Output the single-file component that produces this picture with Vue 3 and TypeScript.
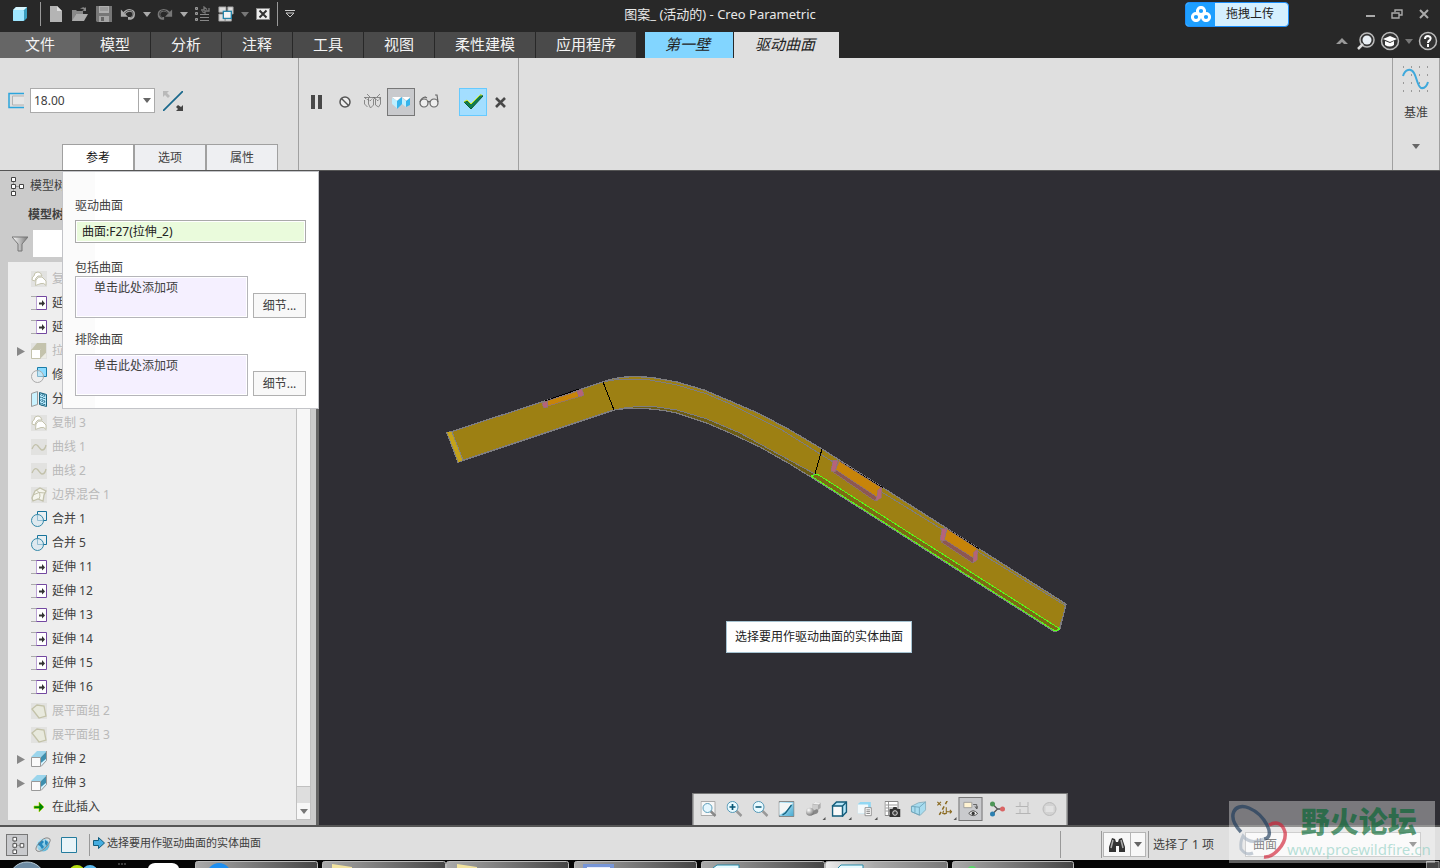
<script setup lang="ts">
import { ref } from 'vue'

interface TreeItem {
  icon: string
  label: string
  dim?: boolean
  branch?: boolean
}

const menuTabs: string[] = ['模型', '分析', '注释', '工具', '视图', '柔性建模', '应用程序']

const quickTools = [
  { icon: 'doc', label: '新建' },
  { icon: 'folder', label: '打开' },
  { icon: 'save', label: '保存' },
  { icon: 'undo', label: '撤消' },
  { icon: 'caret', label: '撤消列表', narrow: true },
  { icon: 'redo', label: '重做' },
  { icon: 'caret', label: '重做列表', narrow: true },
  { icon: 'regen', label: '重新生成' },
  { icon: 'windows', label: '窗口' },
  { icon: 'caret-dim', label: '窗口列表', narrow: true },
  { icon: 'closewin', label: '关闭' },
]

const tree: TreeItem[] = [
  { icon: 'copy', label: '复制', dim: true },
  { icon: 'extend', label: '延伸' },
  { icon: 'extend', label: '延伸' },
  { icon: 'extrude-dim', label: '拉伸', dim: true, branch: true },
  { icon: 'trim', label: '修剪' },
  { icon: 'split', label: '分割' },
  { icon: 'copy', label: '复制 3', dim: true },
  { icon: 'curve', label: '曲线 1', dim: true },
  { icon: 'curve', label: '曲线 2', dim: true },
  { icon: 'blend', label: '边界混合 1', dim: true },
  { icon: 'merge', label: '合并 1' },
  { icon: 'merge', label: '合并 5' },
  { icon: 'extend', label: '延伸 11' },
  { icon: 'extend', label: '延伸 12' },
  { icon: 'extend', label: '延伸 13' },
  { icon: 'extend', label: '延伸 14' },
  { icon: 'extend', label: '延伸 15' },
  { icon: 'extend', label: '延伸 16' },
  { icon: 'flatten', label: '展平面组 2', dim: true },
  { icon: 'flatten', label: '展平面组 3', dim: true },
  { icon: 'extrude', label: '拉伸 2', branch: true },
  { icon: 'extrude', label: '拉伸 3', branch: true },
  { icon: 'insert', label: '在此插入' },
]

const viewTools = [
  { icon: 'zoomfit', label: '重新调整' },
  { icon: 'zoomin', label: '放大' },
  { icon: 'zoomout', label: '缩小' },
  { icon: 'repaint', label: '重画' },
  { icon: 'shade', label: '渲染选项', more: true },
  { icon: 'display', label: '显示样式', more: true },
  { icon: 'saved', label: '已保存方向', more: true },
  { icon: 'viewmgr', label: '视图管理器' },
  { icon: 'persp', label: '透视图' },
  { icon: 'datums', label: '基准显示', more: true },
  { icon: 'annot', label: '注释显示', on: true },
  { icon: 'spin', label: '旋转中心' },
  { icon: 'sim', label: '模拟' },
  { icon: 'ball', label: '暂停' },
]

const panelTabs: string[] = ['参考', '选项', '属性']
const activePanel = ref(0)
const thickness = ref('18.00')
const drivenSurface = ref('曲面:F27(拉伸_2)')
const hint = '单击此处添加项'
</script>

<template>
  <div class="app">
    <svg class="sprite" aria-hidden="true">
      <defs>
        <linearGradient id="gBlue" x1="0" y1="0" x2="1" y2="1">
          <stop offset="0" stop-color="#d5f3ff" /><stop offset="1" stop-color="#45a9d0" />
        </linearGradient>
        <linearGradient id="gGrey" x1="0" y1="0" x2="1" y2="0">
          <stop offset="0" stop-color="#fff" /><stop offset="1" stop-color="#777" />
        </linearGradient>
        <radialGradient id="gSphere" cx=".35" cy=".3" r=".8">
          <stop offset="0" stop-color="#fff" /><stop offset="1" stop-color="#6a6a6a" />
        </radialGradient>
      </defs>
      <symbol id="cube-logo" viewBox="0 0 16 16">
        <path d="M1 4 4 1h11v11l-3 3H1z" fill="#3b9fc0" /><path d="M1 4 4 1h11l-3 3z" fill="#d7f6ff" /><rect x="1" y="4" width="11" height="11" rx="1" fill="#9fe6ff" />
      </symbol>
      <symbol id="doc" viewBox="0 0 16 16">
        <path d="M2 0h7l5 5v11H2z" fill="#b4b4b4" /><path d="M9 0v5h5z" fill="#dedede" />
      </symbol>
      <symbol id="folder" viewBox="0 0 16 16">
        <path d="M0 4h4l1 1h6v3H4l-3 7H0z" fill="#888" /><path d="M4 8h12l-4 7H0z" fill="#aaa" /><path d="M8 3q3-3 5-1l1-1v4h-4l2-1q-1-2-4-1z" fill="#888" />
      </symbol>
      <symbol id="save" viewBox="0 0 16 16">
        <path d="M0 0h16v16H1l-1-1z" fill="#777" /><rect x="3" width="10" height="7" fill="#b0b0b0" /><path d="M4 2h8M4 4h8" stroke="#888" /><rect x="3" y="10" width="10" height="6" fill="#a5a5a5" /><rect x="5" y="11" width="3" height="4" fill="#666" />
      </symbol>
      <symbol id="undo" viewBox="0 0 18 16">
        <path d="M1 3v8h8z" fill="#aaa" /><path d="M4 8q4-5 8-4c5 1 4 8 0 9H9" fill="none" stroke="#aaa" stroke-width="3" /><path d="M5 7q4-4 7-3c4 1 3 7 0 8" fill="none" stroke="#444" />
      </symbol>
      <symbol id="redo" viewBox="0 0 18 16">
        <path d="M17 3v8H9z" fill="#777" /><path d="M14 7Q10 3 6 4c-5 1-5 8 0 9h2" fill="none" stroke="#777" stroke-width="3" /><path d="M13 7Q9 3 6 4c-4 1-4 7 0 8" fill="none" stroke="#333" />
      </symbol>
      <symbol id="caret" viewBox="0 0 8 5"><path d="M0 0h8L4 5z" fill="#aaa" /></symbol>
      <symbol id="caret-dim" viewBox="0 0 8 5"><path d="M0 0h8L4 5z" fill="#777" /></symbol>
      <symbol id="caret-dark" viewBox="0 0 8 5"><path d="M0 0h8L4 5z" fill="#666" /></symbol>
      <symbol id="regen" viewBox="0 0 16 16">
        <path d="M1.500 1.500h2v2h-2zM1.500 6.500h2v2h-2zM1.500 12.500h2v2h-2z" fill="#666" stroke="#999" /><path d="M6 8.500h9M6 11.500h9M6 14.500h9" stroke="#888" /><path d="M7 4h3V1l3 2.500M15 2v3h-4v2L8 5.500" fill="none" stroke="#777" stroke-width="1.300" />
      </symbol>
      <symbol id="windows" viewBox="0 0 18 18">
        <path d="M1 1h8v6H1zM11 1h6v8h-6zM1 9h7v8H1zM8 14h7v3H8z" fill="#ddd" stroke="#999" /><rect x="6" y="6" width="9" height="8" fill="#f4f4f4" stroke="#2585aa" stroke-width="1.500" />
      </symbol>
      <symbol id="closewin" viewBox="-1 -1 16 16">
        <rect x=".5" y="1.500" width="13" height="11" fill="#eee" stroke="#888" /><path d="m3.500 3.500 7 7m0-7-7 7" stroke="#333" stroke-width="2" />
      </symbol>
      <symbol id="thick" viewBox="0 0 16 16">
        <path d="M16 1H1v14h15" fill="none" stroke="#2ca5dc" stroke-width="1.500" /><path d="M16 3.500H4.500v9H16" fill="#e6e6e6" stroke="#b3b3b3" />
      </symbol>
      <symbol id="flip" viewBox="0 0 20 20">
        <path d="M0 20 20 0" stroke="#19688c" stroke-width="1.700" /><path d="M0 0h6L4 2l3 3-2 2-3-3-2 2z" fill="#b9b9b9" /><path d="M20 20h-7l2-2-2-2 2-2 3 2 2-2z" fill="#444" />
      </symbol>
      <symbol id="pause" viewBox="0 0 16 16"><path d="M2 1h4v14H2zM9 1h4v14H9z" fill="#484848" /></symbol>
      <symbol id="none" viewBox="0 0 16 16"><circle cx="8" cy="8" r="5" fill="#eee" stroke="#555" stroke-width="1.500" /><path d="m4 4 8 8" stroke="#555" stroke-width="1.500" /></symbol>
      <symbol id="skeleton" viewBox="0 0 20 16">
        <path d="M1 3.500h17M5.500 4v6l2 4 3-3V5l4-2M12.500 5v6l3 2 2-3V4M1.500 6v4l3 3M4 0l3 3M17 0l-4 4" fill="none" stroke="#888" /><path d="m2 4 5 3 4-4 4 4 3-4" fill="none" stroke="#666" stroke-dasharray="1 1" />
      </symbol>
      <symbol id="solid" viewBox="0 0 20 16">
        <path d="M1 3h9l-4 4zM11 3h8l-3 4z" fill="#fff" /><path d="M1 4v6l6 5V7zM11 4l4 3v6l-4-3z" fill="#bdefff" /><path d="M6 7l5-4v7l-5 5zM15 7l4-3v7l-4 2z" fill="#35b4eb" />
      </symbol>
      <symbol id="glasses" viewBox="0 0 20 16">
        <circle cx="5" cy="9" r="4" fill="#eee" stroke="#666" stroke-width="1.200" /><circle cx="15" cy="9" r="4" fill="#eee" stroke="#666" stroke-width="1.200" /><path d="M1 8q1-4 5-5l2 1M9 8q1-1 2 0M19 8l-1-7h-2" fill="none" stroke="#666" stroke-width="1.200" />
      </symbol>
      <symbol id="check" viewBox="0 0 20 16"><path d="m1 8 3-1 4 3L17 1l3 1L8 15z" fill="#127b50" stroke="#0b5a31" /><path d="m1 8 3-2 4 4 9-9h2" fill="none" stroke="#d4ee18" /></symbol>
      <symbol id="cross" viewBox="0 0 16 16"><path d="m3 4 9 9M12 4l-9 9" stroke="#484848" stroke-width="2.600" /></symbol>
      <symbol id="wave" viewBox="0 0 28 28">
        <path d="M1 1h1M9 1h1M17 1h1M25 1h1M9 9h1M17 9h1M25 9h1M1 17h1M9 17h1M17 17h1M1 25h1M9 25h1M17 25h1M25 25h1" stroke="#555" /><path d="M1 10C3 3 9 2 12 7s3 12 7 15q5 1 7-6" fill="none" stroke="#3fa9dc" stroke-width="2" />
      </symbol>
      <symbol id="cloud" viewBox="0 0 20 16"><g fill="none" stroke="#fff" stroke-width="3"><circle cx="10" cy="5" r="3.600" /><circle cx="5" cy="11" r="3.600" /><circle cx="15" cy="11" r="3.600" /></g></symbol>
      <symbol id="min" viewBox="0 0 12 12"><path d="M2 8h9" stroke="#aaa" stroke-width="2" /></symbol>
      <symbol id="restore" viewBox="0 0 12 12"><path d="M4 4V2h7v5H8M1 5h7v5H1z" fill="none" stroke="#aaa" stroke-width="1.400" /></symbol>
      <symbol id="close" viewBox="0 0 12 12"><path d="m2 2 8 8m0-8-8 8" stroke="#aaa" stroke-width="2" /></symbol>
      <symbol id="up" viewBox="0 0 12 8"><path d="m0 7 6-6 6 6H8L6 5 4 7z" fill="#999" /></symbol>
      <symbol id="search" viewBox="0 0 18 18"><circle cx="10" cy="8" r="7" fill="#333" stroke="#bbb" stroke-width="1.500" /><circle cx="10" cy="8" r="4.500" fill="#eaf0f5" /><path d="m6 12-5 5" stroke="#ddd" stroke-width="2.500" /></symbol>
      <symbol id="hat" viewBox="0 0 20 20"><circle cx="10" cy="10" r="8.500" fill="#333" stroke="#bbb" stroke-width="1.500" /><path d="m3 8 7-3 7 3-7 3z" fill="#fff" /><path d="M5 10v4q5 3 9 0v-4l-4 2z" fill="#fff" /></symbol>
      <symbol id="help" viewBox="0 0 20 20"><circle cx="10" cy="10" r="8.500" fill="#333" stroke="#bbb" stroke-width="1.500" /><path d="M7 8q0-3 3-3 4 1 2 4-2 1-2 3" fill="none" stroke="#fff" stroke-width="2" /><path d="M9 13h2v3H9z" fill="#fff" /></symbol>
      <symbol id="nodes" viewBox="0 0 16 20">
        <path d="M5.500 5v10M5 10.500h6" stroke="#999" /><path d="M3.500 1.500h4v4h-4zM3.500 8.500h4v4h-4zM3.500 15.500h4v4h-4zM11.500 8.500h4v4h-4z" fill="#fff" stroke="#444" />
      </symbol>
      <symbol id="filter" viewBox="0 0 16 16"><path d="M0 1h16l-6 7v7H6V8z" fill="url(#gGrey)" stroke="#777" /></symbol>
      <symbol id="tri" viewBox="0 0 8 9"><path d="M0 0v9l8-4.500z" fill="#888" /></symbol>
      <symbol id="copy" viewBox="0 0 16 16"><path d="M0 0h16v16H0z" fill="#e2e2e0" /><path d="M1 9q0-4 2-4 0-4 4-4 3 0 4 4H7q-3 2-3 5z" fill="#fff" stroke="#c4c3ad" /><path d="M4.500 14.500 5 9q2-4 6-3l4 4v4.500q-2-3-5-2t-5.500 2z" fill="#fff" stroke="#c4c3ad" /></symbol>
      <symbol id="extend" viewBox="0 0 16 16"><path d="M0 1.500h5M0 14.500h5" stroke="#aaa" /><path d="M5.500 1.500h10v13h-10z" fill="#fff" stroke="#7348a0" /><path d="M5.500 2v12" stroke="#bca4d5" /><path d="M8 7.500h3V5l3 3.500-3 3V9.500H8z" fill="#333" /></symbol>
      <symbol id="extrude-dim" viewBox="0 0 16 16"><path d="M0 0h16v16H0z" fill="#e2e2e0" /><path d="M1 6 6 0h9v10l-5 5V6z" fill="#c4c3ad" /><path d="M.5 6.500h9v9h-9z" fill="#fff" stroke="#c4c3ad" /><path d="m10 15 5-5v5z" fill="#ecece4" /></symbol>
      <symbol id="trim" viewBox="0 0 16 16"><path d="M6.500.500h9v9h-9z" fill="#8ddcff" stroke="#1b7da8" /><circle cx="6.500" cy="9.500" r="6" fill="#eee" fill-opacity=".5" stroke="#aaa" /></symbol>
      <symbol id="split" viewBox="0 0 16 16"><path d="m.5 2.500 6-2v13l-6 2z" fill="#c9f2ff" stroke="#999" /><path d="m8.500 1.500 7 2v12l-7-2z" fill="#bdecff" stroke="#17627f" /><path d="m9 3 6 2M9 6l6 2M9 9l6 2M9 12l6 2M11 2v13M13 3v12" stroke="#17627f" stroke-dasharray="1 1" /></symbol>
      <symbol id="curve" viewBox="0 0 16 16"><path d="M0 0h16v16H0z" fill="#e2e2e0" /><path d="M1 10q3-7 6-3t4 4q3 0 4-5" fill="none" stroke="#c2c1aa" stroke-width="1.300" /></symbol>
      <symbol id="blend" viewBox="0 0 16 16"><path d="M0 0h16v16H0z" fill="#e2e2e0" /><path d="m1 11 3-7 5-3 6 3-2 4-1 6-5-2-5 2z" fill="#f5f5ed" stroke="#c2c1aa" stroke-width="1.300" /><path d="M5 3q6 3 3 9M2 8q6-4 12-2" fill="none" stroke="#c2c1aa" /></symbol>
      <symbol id="merge" viewBox="0 0 16 16"><path d="M6.500.500h9v9h-9z" fill="#e8eff2" stroke="#17739b" /><circle cx="6.500" cy="9.500" r="6" fill="#d6e7ef" fill-opacity=".65" stroke="#3488a8" /></symbol>
      <symbol id="flatten" viewBox="0 0 16 16"><path d="M0 0h16v16H0z" fill="#e2e2e0" /><path d="m1 6 5-4 7 1 2 10-7 2z" fill="#e8e9dd" stroke="#c3c2a9" stroke-width="1.300" /></symbol>
      <symbol id="extrude" viewBox="0 0 16 16"><path d="M0 6 6 0h10L10 6z" fill="#9bd5ec" /><path d="M10 6 16 0v9l-6 3z" fill="#3e8fae" /><path d="m10 15 6-6v-2l-6 5z" fill="#d5f3ff" /><path d="m10 15.500 5.500-6V0" fill="none" stroke="#999" /><path d="M.5 6.500h9v9h-9z" fill="#fafafa" stroke="#999" /></symbol>
      <symbol id="insert" viewBox="0 0 16 16"><path d="M3 7h5V3l5 5-5 5V9.500H3z" fill="#008500" stroke="#b2d900" stroke-width=".6" /></symbol>
      <symbol id="globe" viewBox="0 0 16 16"><circle cx="8" cy="8" r="6.500" fill="url(#gBlue)" /><path d="m3 6 4-3 2 2-2 2 2 3-2 2-2-3-2-1zM10 3l3 2-1 4-2-2z" fill="#2687bc" /><path d="M2 14q-3-2 2-8t9-5q5 1-1 8T2 14z" fill="none" stroke="#888" /></symbol>
      <symbol id="square" viewBox="0 0 16 16"><path d="M.5.500h15v15H.5z" fill="#e9f4f8" stroke="#247b9d" /></symbol>
      <symbol id="next" viewBox="0 0 12 12"><path d="M.5 3.500h5v-3l6 5.500-6 5.500v-3h-5z" fill="#45ade0" stroke="#125c7d" /></symbol>
      <symbol id="binoc" viewBox="0 0 18 16"><path d="m4 1 3 1 1 3h2l1-3 3-1 3 9v5h-6V9H8v6H1v-5z" fill="#333" /><path d="m5 3-2 8m10-8 2 8" stroke="#aaa" stroke-width="1.500" /></symbol>
      <symbol id="zoomfit" viewBox="0 0 16 16"><path d="M.5.500h14v14H.5z" fill="#f7f7f7" stroke="#aaa" /><path d="m10 10 5 5" stroke="#888" stroke-width="2.500" /><circle cx="7" cy="7" r="4.500" fill="#e5f7ff" stroke="#5b9db9" /></symbol>
      <symbol id="zoomin" viewBox="0 0 16 16"><path d="m10 10 5 5" stroke="#999" stroke-width="2.500" /><circle cx="6" cy="6" r="5.500" fill="#e9faff" stroke="#5397b5" /><path d="M3 6h6M6 3v6" stroke="#075675" stroke-width="1.700" /></symbol>
      <symbol id="zoomout" viewBox="0 0 16 16"><path d="m10 10 5 5" stroke="#999" stroke-width="2.500" /><circle cx="6" cy="6" r="5.500" fill="#e9faff" stroke="#5397b5" /><path d="M3 6h6" stroke="#075675" stroke-width="1.700" /></symbol>
      <symbol id="repaint" viewBox="0 0 16 16"><path d="M.5.500h15v15H.5z" fill="url(#gBlue)" stroke="#888" /><path d="M1 2h14q-3 1-6 7l-8 5z" fill="#f4f6f6" /><path d="m13 4-6 8-3 2" stroke="#17617e" fill="none" stroke-width="1.300" /></symbol>
      <symbol id="shade" viewBox="0 0 18 16"><path d="m8 2 3-2 6 1v6l-3 2H8z" fill="#aaa" /><path d="m8 2 3-2 6 1-2 2z" fill="#eee" /><path d="M8 3h6v6H8z" fill="#ccc" /><path d="m6 11 7-3q3 2 0 5l-6 2z" fill="#888" /><circle cx="5" cy="11" r="4.500" fill="url(#gSphere)" /></symbol>
      <symbol id="display" viewBox="0 0 16 16"><path d="m1 5 4-4h10v10l-4 4z" fill="#b6e7fa" stroke="#155d7b" stroke-width="1.500" /><path d="M1 5h10v10H1zM11 5l4-4" fill="#fafafa" stroke="#155d7b" stroke-width="1.500" /></symbol>
      <symbol id="saved" viewBox="0 0 18 16"><path d="m0 3 3-3h12v9l-3 4H0z" fill="#92d7f2" /><path d="M0 3h12v10H0z" fill="#f3f9fb" /><path d="M8.500 6.500h7v9h-7z" fill="#fff" stroke="#888" /><path d="M10 9h4M10 11h4M10 13h4" stroke="#777" /></symbol>
      <symbol id="viewmgr" viewBox="0 0 16 16"><path d="M.5.500h13v14H.5z" fill="#fff" stroke="#888" /><path d="M1 4h12M1 7h12M1 10h12M4 1v13" stroke="#999" /><path d="M5 8h3l1-2h3l1 2h3v8H5z" fill="#333" /><circle cx="10.500" cy="12" r="2.300" fill="#444" stroke="#ddd" /></symbol>
      <symbol id="persp" viewBox="0 0 18 16"><path d="M1 5 9 1l8-1v9l-6 6-10-4z" fill="#a8dcef" stroke="#87aebc" /><path d="m1 5 9 1v9L1 11zM10 6l7-6M5 5v7" fill="none" stroke="#6ca5bb" /></symbol>
      <symbol id="datums" viewBox="0 0 18 18"><path d="m1 1 4 4m0-4L1 5" stroke="#8a6a20" stroke-width="1.300" /><path d="M12 0 3 16" fill="none" stroke="#8a6a20" stroke-width="1.700" stroke-dasharray="4 3" /><path d="M11 7v7H8M11 12h6m-2-2 2 2-2 2M8 11l-1 3 3 1" fill="none" stroke="#8a6a20" stroke-width="1.200" /></symbol>
      <symbol id="annot" viewBox="0 0 18 18"><path d="M1.500 1.500h9v6h-9z" fill="#fff3d2" stroke="#999" /><path d="M12 4h4v5M14 6l2 3 1-3" fill="none" stroke="#555" /><path d="M7 14q5-6 10 0-5 5-10 0z" fill="#eee" stroke="#444" /><circle cx="12" cy="14" r="1.800" fill="#333" /></symbol>
      <symbol id="spin" viewBox="0 0 16 16"><path d="m3 3 5 5-5 5m5-5h5" fill="none" stroke="#555" stroke-width="1.300" /><circle cx="3" cy="3" r="2.500" fill="#4d9657" /><circle cx="3" cy="13" r="2.500" fill="#2c80b0" /><circle cx="13" cy="8" r="2.500" fill="#da6464" /></symbol>
      <symbol id="sim" viewBox="0 0 16 16"><path d="M4.500 1v4.500H0m4.500 0h8V1M0 12.500h15M4.500 8v4m8-6v6" fill="none" stroke="#b5b5b5" /></symbol>
      <symbol id="ball" viewBox="0 0 16 16"><circle cx="8" cy="8" r="6.500" fill="#d2d2d2" stroke="#bbb" /><path d="M4 5h8v6H4z" fill="#e2e2e2" /></symbol>
    </svg>

    <header class="titlebar">
      <div class="quick">
        <span class="logo"><svg width="16" height="16"><use href="#cube-logo" /></svg></span>
        <span class="bar"></span>
        <div class="tools">
          <button v-for="(t, i) in quickTools" :key="i" :class="['tool', { narrow: t.narrow }]" :aria-label="t.label">
            <svg :class="t.narrow ? 'caret' : 'ico'"><use :href="'#' + t.icon" /></svg>
          </button>
        </div>
        <span class="bar"></span>
        <button class="tool" aria-label="自定义快速访问工具栏">
          <svg width="10" height="8" viewBox="0 0 10 8"><path d="M0 .500h10M1 3h8L5 7z" fill="none" stroke="#ccc" /></svg>
        </button>
      </div>
      <h1 class="title">图案_ (活动的) - Creo Parametric</h1>
      <div class="window-side">
        <button class="upload"><span class="upload-icon"><svg width="20" height="16"><use href="#cloud" /></svg></span><span class="upload-text">拖拽上传</span></button>
        <div class="win-buttons">
          <button aria-label="最小化"><svg width="12" height="12"><use href="#min" /></svg></button>
          <button aria-label="还原"><svg width="12" height="12"><use href="#restore" /></svg></button>
          <button aria-label="关闭窗口"><svg width="12" height="12"><use href="#close" /></svg></button>
        </div>
      </div>
    </header>

    <nav class="tabs">
      <button class="file">文件</button>
      <button v-for="m in menuTabs" :key="m" class="tab">{{ m }}</button>
      <button class="context wall">第一壁</button>
      <button class="context current">驱动曲面</button>
      <div class="help-tools">
        <button aria-label="最小化功能区"><svg width="12" height="8"><use href="#up" /></svg></button>
        <button aria-label="搜索"><svg width="18" height="18"><use href="#search" /></svg></button>
        <button aria-label="学习"><svg width="20" height="20"><use href="#hat" /></svg></button>
        <button class="slim" aria-label="学习列表"><svg class="caret"><use href="#caret-dim" /></svg></button>
        <button aria-label="帮助"><svg width="20" height="20"><use href="#help" /></svg></button>
      </div>
    </nav>

    <section class="ribbon">
      <div class="group settings">
        <div class="thickness">
          <svg width="16" height="17"><use href="#thick" /></svg>
          <div class="combo">
            <input v-model="thickness" aria-label="厚度" />
            <button aria-label="厚度列表"><svg class="caret"><use href="#caret-dark" /></svg></button>
          </div>
          <button class="plain" aria-label="反向"><svg width="20" height="20"><use href="#flip" /></svg></button>
        </div>
        <div class="panel-tabs" role="tablist">
          <button v-for="(p, i) in panelTabs" :key="p" role="tab" :aria-selected="i === activePanel" :class="{ on: i === activePanel }" @click="activePanel = i">{{ p }}</button>
        </div>
      </div>
      <div class="group actions">
        <button aria-label="暂停"><svg width="16" height="16"><use href="#pause" /></svg></button>
        <button aria-label="无预览"><svg width="16" height="16"><use href="#none" /></svg></button>
        <button aria-label="分离"><svg width="20" height="16"><use href="#skeleton" /></svg></button>
        <button class="pressed" aria-label="连接"><svg width="20" height="16"><use href="#solid" /></svg></button>
        <button aria-label="预览"><svg width="20" height="16"><use href="#glasses" /></svg></button>
        <button class="ok" aria-label="确定"><svg width="20" height="16"><use href="#check" /></svg></button>
        <button aria-label="取消"><svg width="16" height="16"><use href="#cross" /></svg></button>
      </div>
      <button class="datum">
        <svg width="28" height="28"><use href="#wave" /></svg>
        <span>基准</span>
        <svg class="caret"><use href="#caret-dark" /></svg>
      </button>
    </section>

    <main class="work">
      <aside class="side">
        <div class="side-title"><svg width="16" height="20"><use href="#nodes" /></svg><span>模型树</span></div>
        <div class="side-sub">模型树</div>
        <div class="side-filter"><svg width="16" height="16"><use href="#filter" /></svg><input aria-label="过滤" /></div>
        <div class="tree-box">
          <ul class="tree">
            <li v-for="(n, i) in tree" :key="i" :class="{ dim: n.dim }">
              <span class="twist"><svg v-if="n.branch" width="8" height="9"><use href="#tri" /></svg></span>
              <svg width="16" height="16"><use :href="'#' + n.icon" /></svg>
              <span>{{ n.label }}</span>
            </li>
          </ul>
          <div class="scroll">
            <div class="thumb"></div>
            <div class="track"></div>
            <button aria-label="向下滚动"><svg class="caret"><use href="#caret-dim" /></svg></button>
          </div>
        </div>
      </aside>

      <div class="canvas">
        <svg class="model" width="650" height="290" viewBox="430 360 650 290" shape-rendering="crispEdges">
          <path d="M447 433 603 382Q613 378 626 377 640 376 655 378L677 382 704 390 730 401 760 414 790 430 822 449 1066 604 1060 629 1055 632 811 477 790 464 760 447 730 433 707 423 677 413Q655 408 630 408L614 410 458 462z" fill="#9d8013" stroke="#7e7d80" stroke-width="1.300" />
          <path d="m447 433 4-1 11 28-4 2z" fill="#c4a31b" stroke="#c4a31b" />
          <path d="m447 433 11 29M452 432l11 28" stroke="#85847a" />
          <path d="M614 410Q635 405 657 407L677 410 707 419 740 433 780 455 815 474 811 477 790 464 760 447 730 433 707 423 677 413Q655 408 630 408z" fill="#6d5d14" stroke="#7e7d80" />
          <path d="M603 382q12-3 24-3l23 1 27 5 30 9 23 10 30 15 22 11 35 22 249 154-7 23" fill="none" stroke="#7e7d80" />
          <path d="m811 476 6-2 243 155-5 2z" fill="#7d6915" stroke="#55ff18" />
          <path d="m603 382 11 28M822 449l-7 25M545 401l34-12M839 461l44 27M947 529l32 20" fill="none" stroke="#000" />
          <g stroke="#8b7480" stroke-width=".7">
            <path d="m547 401 31-10v6l-30 9zM839 461l43 27-5 9-42-26zM947 529l31 20-4 10-30-19z" fill="#c78409" />
            <path d="m833 472 3-2 41 27-2 4zM941 542l4-2 30 19-2 4z" fill="#8d5752" />
            <path d="m542 403 5-2 1 6-4 1zM577 391l5-2 2 6-5 2zM833 460h5l-3 12-4-1zM882 487l-4 3-2 11 5-3zM942 529l5-1-3 13-4-1zM978 549l-4 3-1 11 4-3z" fill="#b5637a" />
          </g>
        </svg>
        <div class="tip">选择要用作驱动曲面的实体曲面</div>
        <div class="view-tools">
          <button v-for="v in viewTools" :key="v.icon" :class="{ on: v.on, more: v.more }" :aria-label="v.label"><svg width="16" height="16"><use :href="'#' + v.icon" /></svg></button>
        </div>
      </div>

      <form class="panel" @submit.prevent>
        <div class="field">
          <label for="driven">驱动曲面</label>
          <input id="driven" v-model="drivenSurface" />
        </div>
        <div class="field tight">
          <label for="include">包括曲面</label>
          <div class="pick"><textarea id="include" :value="hint" readonly></textarea><button>细节...</button></div>
        </div>
        <div class="field">
          <label for="exclude">排除曲面</label>
          <div class="pick"><textarea id="exclude" :value="hint" readonly></textarea><button>细节...</button></div>
        </div>
      </form>
    </main>

    <footer class="status">
      <button class="status-btn pressed" aria-label="导航器"><svg width="16" height="18"><use href="#nodes" /></svg></button>
      <button class="status-btn" aria-label="浏览器"><svg width="16" height="16"><use href="#globe" /></svg></button>
      <button class="status-btn" aria-label="全屏"><svg width="16" height="16"><use href="#square" /></svg></button>
      <div class="message"><svg width="12" height="12"><use href="#next" /></svg><span>选择要用作驱动曲面的实体曲面</span></div>
      <div class="status-right">
        <div class="find">
          <button aria-label="查找"><svg width="18" height="16"><use href="#binoc" /></svg></button>
          <button class="drop" aria-label="查找列表"><svg class="caret"><use href="#caret-dark" /></svg></button>
        </div>
        <span class="count">选择了 1 项</span>
        <div class="kind">
          <select aria-label="选择过滤器"><option>曲面</option></select>
          <svg class="caret"><use href="#caret-dark" /></svg>
        </div>
      </div>
    </footer>

    <svg class="taskbar" height="8" aria-hidden="true">
      <defs>
        <linearGradient id="gTask"><stop offset="0" stop-color="#aaa" /><stop offset=".5" stop-color="#777" /><stop offset="1" stop-color="#444" /></linearGradient>
        <linearGradient id="gTaskOn"><stop offset="0" stop-color="#eee" /><stop offset=".4" stop-color="#aaa" /><stop offset="1" stop-color="#777" /></linearGradient>
      </defs>
      <circle cx="27" cy="20" r="18" fill="#6d8ba3" stroke="#b8ccd8" />
      <circle cx="77" cy="13" r="8" fill="#b5dc10" /><circle cx="90" cy="13" r="8" fill="#5bb9ee" />
      <path d="M118 4h2m1 0h2m1 0h2" stroke="#777" />
      <rect x="148" y="3" width="31" height="12" rx="7" fill="#fff" />
      <g fill="url(#gTask)" stroke="#bbb">
        <rect x="195.500" y="1.500" width="122" height="12" rx="2" /><rect x="322.500" y="1.500" width="123" height="12" rx="2" /><rect x="446.500" y="1.500" width="122" height="12" rx="2" /><rect x="574.500" y="1.500" width="122" height="12" rx="2" /><rect x="701.500" y="1.500" width="123" height="12" rx="2" /><rect x="825.500" y="1.500" width="122" height="12" rx="2" fill="url(#gTaskOn)" /><rect x="952.500" y="1.500" width="121" height="12" rx="2" />
      </g>
      <circle cx="219" cy="15" r="12" fill="#1e8ff0" />
      <path d="m332 4 20 3v2h-20zM457 4l20 3v2h-20z" fill="#f3e4a0" />
      <path d="M583 4h31v5h-31z" fill="#7796d8" /><path d="M587 7h23v2h-23z" fill="#e7ecfa" />
      <path d="m713 8 4-3h22v4h-26zM838 8l3-3h22v4h-25z" fill="#e9fbff" stroke="#258baa" />
      <circle cx="972" cy="11" r="5" fill="#57d866" />
      <path d="M1426.500 8V1.500H1439V8" fill="#444" stroke="#999" />
    </svg>

    <div class="watermark">
      <svg width="66" height="58" viewBox="0 0 66 58">
        <path d="M12 31C-3 15 5 1 20 7S48 36 35 38" fill="none" stroke="#1c3a5a" stroke-width="3.500" />
        <path d="M35 38Q21 44 14 35q-3 6-2 13 5 7 12 4" fill="none" stroke="#a8b4c2" stroke-width="3" />
        <path d="M40 24q12-6 16 7c2 12-12 26-21 25" fill="none" stroke="#d21f34" stroke-width="3.500" />
      </svg>
      <div class="mark-text"><strong>野火论坛</strong><span>www.proewildfire.cn</span></div>
    </div>
  </div>
</template>

<style>
html,
body {
  margin: 0;
  background: #000;
}
</style>

<style scoped>
.app {
  position: relative;
  display: flex;
  flex-direction: column;
  height: 100vh;
  overflow: hidden;
  color: #404040;
  font: 12px/16px "Noto Sans", "Noto Sans CJK SC", sans-serif;
}
.app * {
  box-sizing: border-box;
}
.sprite {
  position: absolute;
  width: 0;
  height: 0;
}
button {
  display: flex;
  align-items: center;
  justify-content: center;
  padding: 0;
  border: 0;
  background: none;
  color: inherit;
  font: inherit;
  white-space: nowrap;
}
input,
textarea,
select {
  border: 0;
  border-radius: 0;
  color: inherit;
  font: inherit;
  outline: 0;
}
svg {
  flex: none;
  display: block;
}
.caret {
  width: 8px;
  height: 5px;
}
.ico {
  width: 16px;
  height: 16px;
}
.titlebar {
  display: grid;
  grid-template-columns: 1fr auto 1fr;
  align-items: center;
  flex: 0 0 32px;
  padding-bottom: 4px;
  background: #282828;
}
.quick,
.tools {
  display: flex;
  align-items: center;
}
.tools {
  padding: 0 2px 0 3px;
}
.logo {
  display: flex;
  justify-content: center;
  width: 40px;
}
.bar {
  width: 1px;
  height: 24px;
  background: #999;
}
.tool {
  width: 24px;
  height: 24px;
}
.narrow {
  width: 13px;
}
.title {
  margin: 0;
  color: #e8e8e8;
  font-size: 13px;
  font-weight: 400;
}
.window-side {
  display: flex;
  align-items: center;
  justify-content: flex-end;
  gap: 67px;
  padding-right: 3px;
}
.upload {
  width: 104px;
  height: 25px;
  border: 1px solid #1b8efa;
  border-radius: 4px;
  overflow: hidden;
  background: #d5f0ff;
  color: #222;
}
.upload-icon {
  display: flex;
  align-items: center;
  justify-content: center;
  width: 29px;
  height: 100%;
  background: #1e9fff;
}
.upload-text {
  flex: 1;
  padding-right: 3px;
}
.win-buttons {
  display: flex;
}
.win-buttons button {
  width: 27px;
}
.tabs {
  display: flex;
  flex: 0 0 26px;
  background: #282828;
}
.tabs > button {
  height: 26px;
  padding-bottom: 2px;
  color: #f3f3f3;
  font-size: 15px;
}
.tabs > .file {
  width: 80px;
  background: #666;
}
.tabs > .tab {
  padding: 0 20px 2px;
  border-right: 1px solid #282828;
  background: #4a4a4a;
}
.tabs > .context {
  padding-right: 3px;
  color: #222;
  font-style: italic;
}
.tabs > .wall {
  width: 88px;
  margin: 0 1px 0 8px;
  background: #82d5ff;
}
.tabs > .current {
  width: 105px;
  background: #dfdfdf;
}
.help-tools {
  display: flex;
  align-items: center;
  height: 18px;
  margin-left: auto;
}
.help-tools button {
  width: 24px;
}
.help-tools .slim {
  width: 14px;
}
.ribbon {
  display: flex;
  flex: 0 0 113px;
  border-bottom: 1px solid #555;
  background: #dfdfdf;
}
.group {
  border-right: 1px solid #a0a0a0;
}
.settings {
  width: 299px;
}
.thickness {
  display: flex;
  align-items: center;
  gap: 8px;
  height: 86px;
  padding: 0 0 1px 8px;
}
.combo {
  display: flex;
  width: 125px;
  height: 25px;
  margin-left: -2px;
  border: 1px solid #aaa;
  background: #fff;
}
.combo input {
  flex: 1;
  min-width: 0;
  padding: 0 3px;
}
.combo button {
  width: 16px;
  border-left: 1px solid #aaa;
}
.panel-tabs {
  display: flex;
  padding-left: 62px;
}
.panel-tabs button {
  width: 72px;
  height: 26px;
  border: 1px solid #a0a0a0;
  border-bottom: 0;
  background: #eeeff2;
}
.panel-tabs .on {
  background: #fff;
  color: #111;
}
.actions {
  display: flex;
  align-items: center;
  height: 112px;
  padding: 0 3px 24px 4px;
}
.actions button {
  width: 28px;
  height: 28px;
}
.actions .pressed {
  border: 1px solid #777;
  background: #c9cacd;
}
.actions .ok {
  margin-left: 16px;
  border: 1px solid #66caff;
  background: #a3deff;
}
.datum {
  flex-direction: column;
  justify-content: flex-start;
  width: 48px;
  margin-left: auto;
  padding: 8px 0 0;
  border: solid #a0a0a0;
  border-width: 0 1px;
}
.datum span {
  margin: 11px 0 23px;
}
.work {
  position: relative;
  display: flex;
  flex: 1;
  min-height: 0;
}
.side {
  display: flex;
  flex-direction: column;
  flex: 0 0 319px;
  padding: 0 5px 5px 8px;
  border-right: 3px solid #646464;
  background: #cbcbcb;
}
.side-title {
  display: flex;
  align-items: center;
  gap: 6px;
  height: 29px;
}
.side-sub {
  height: 29px;
  padding-left: 20px;
  font-weight: 700;
  line-height: 29px;
}
.side-filter {
  display: flex;
  align-items: center;
  gap: 5px;
  height: 29px;
  padding-left: 4px;
}
.side-filter input {
  flex: 1;
  height: 27px;
  background: #fff;
}
.tree-box {
  display: flex;
  flex: 1;
  min-height: 0;
  margin-top: 4px;
  background: #eee;
}
.tree {
  flex: 1;
  margin: 0;
  padding: 5px 0 0;
  list-style: none;
}
.tree li {
  display: flex;
  align-items: center;
  gap: 5px;
  height: 24px;
}
.twist {
  display: flex;
  justify-content: flex-end;
  width: 18px;
  padding-right: 1px;
}
.dim {
  color: #b9b9b9;
}
.scroll {
  display: flex;
  flex-direction: column;
  width: 15px;
  border: 1px solid #c0c0c0;
}
.thumb {
  flex: 1;
  border-bottom: 1px solid #c0c0c0;
  background: #f7f7f7;
}
.track {
  height: 16px;
  background: #dedede;
}
.scroll button {
  height: 16px;
  background: #f7f7f7;
}
.canvas {
  position: relative;
  flex: 1;
  background: #2f2e34;
}
.model {
  position: absolute;
  top: 189px;
  left: 111px;
}
.tip {
  position: absolute;
  top: 450px;
  left: 407px;
  padding: 7px 8px;
  border: 1px solid #a6c3d2;
  background: #fff;
  color: #222;
}
.view-tools {
  position: absolute;
  bottom: 0;
  left: 50%;
  display: flex;
  align-items: center;
  justify-content: space-between;
  width: 375px;
  height: 32px;
  padding: 0 4px 2px 3px;
  border: 1px solid #777;
  border-bottom: 0;
  background: #dfdfdf;
  transform: translateX(-50%);
}
.view-tools button {
  position: relative;
  width: 24px;
  height: 24px;
}
.view-tools .on {
  border: 1px solid #777;
  background: #c9cacd;
}
.view-tools .more::after {
  position: absolute;
  right: 0;
  bottom: 1px;
  border: solid #555;
  border-width: 0 0 3px 3px;
  border-left-color: transparent;
  content: "";
}
.panel {
  position: absolute;
  top: 0;
  left: 62px;
  display: flex;
  flex-direction: column;
  gap: 14px;
  width: 257px;
  padding: 26px 12px 12px;
  border: 1px solid #c3c4c8;
  background: linear-gradient(90deg, #fbfbfb 32px, #fff 32px);
}
.field {
  display: flex;
  flex-direction: column;
  gap: 6px;
}
.tight {
  gap: 0;
  padding-top: 3px;
}
.field input {
  height: 23px;
  padding: 0 6px 2px;
  border: 1px solid #aaa;
  background: #eafbdc;
  box-shadow: inset 0 0 0 1px #fff;
  color: #222;
}
.pick {
  display: flex;
  align-items: flex-end;
  justify-content: space-between;
}
.pick textarea {
  width: 173px;
  height: 42px;
  padding: 3px 18px;
  border: 1px solid #b5b5b9;
  background: #f5f0ff;
  box-shadow: inset 0 0 0 1px #fff;
  resize: none;
}
.pick button {
  width: 53px;
  height: 25px;
  border: 1px solid #b0b0b0;
  background: #f8f8f8;
}
.status {
  display: flex;
  align-items: center;
  flex: 0 0 35px;
  padding: 2px 19px 0 4px;
  border-top: 2px solid #555;
  background: #dfdfdf;
}
.status-btn {
  width: 26px;
  height: 22px;
}
.status-btn.pressed {
  width: 22px;
  margin: 0 2px;
  border: 1px solid #777;
  background: #c9cacd;
}
.message {
  display: flex;
  align-items: center;
  gap: 2px;
  height: 22px;
  margin-left: 7px;
  padding: 0 0 4px 3px;
  border-left: 1px solid #999;
  font-size: 11px;
}
.status-right {
  display: flex;
  align-items: center;
  height: 27px;
  margin-left: auto;
  padding-left: 40px;
  border-left: 1px solid #999;
}
.find {
  display: flex;
  align-items: center;
  height: 27px;
  padding: 0 2px 0 1px;
  border: solid #999;
  border-width: 0 1px;
}
.find button {
  width: 28px;
  height: 25px;
  border: 1px solid #b5b5b5;
  background: #f8f8f8;
}
.find .drop {
  width: 15px;
  border-left: 0;
}
.count {
  width: 96px;
  padding-left: 4px;
}
.kind {
  position: relative;
  width: 176px;
}
.kind select {
  width: 100%;
  height: 25px;
  padding: 0 7px;
  border: 1px solid #b5b5b5;
  background: #f8f8f8;
  appearance: none;
}
.kind svg {
  position: absolute;
  top: 10px;
  right: 4px;
}
.taskbar {
  flex: 0 0 8px;
  width: 100%;
  background: #050505;
}
.watermark {
  position: absolute;
  right: 5px;
  bottom: 5px;
  display: flex;
  width: 206px;
  height: 62px;
  background: rgba(255, 255, 255, 0.36);
  pointer-events: none;
}
.watermark svg {
  opacity: 0.65;
}
.mark-text {
  display: flex;
  flex-direction: column;
  align-items: flex-end;
  flex: 1;
  margin-left: -8px;
}
.mark-text strong {
  margin: 4px 19px 0 0;
  color: rgba(0, 100, 45, 0.64);
  font-size: 29px;
  font-weight: 900;
  line-height: 34px;
}
.mark-text span {
  margin-right: 5px;
  color: rgba(125, 200, 185, 0.55);
  font-size: 15px;
  line-height: 20px;
}
</style>
